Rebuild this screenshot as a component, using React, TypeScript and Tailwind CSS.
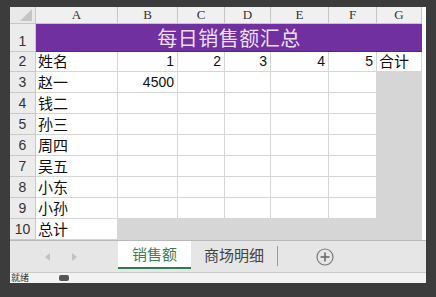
import React from "react";

const cjk = "font-['Noto_Sans_CJK_SC','Noto_Sans',sans-serif]";
const line = "border-r border-b border-[#d6d6d6]";

const letters = ["A", "B", "C", "D", "E", "F", "G"];
const names = ["赵一", "钱二", "孙三", "周四", "吴五", "小东", "小孙"];

function RowHead({ n }: { n: number }) {
  return (
    <div className="flex items-end justify-center border-r border-b border-[#c9c9c9] bg-[#ececec] pb-[1px] font-['Liberation_Sans',sans-serif] text-[14px] leading-[18px] text-[#333]">
      {n}
    </div>
  );
}

export default function App() {
  return (
    <div className="relative h-[297px] w-[436px] overflow-hidden bg-[#3c3c3c] pl-[10px] pr-[10px] pt-[7px]">
      <div className="flex h-[276px] w-[416px] flex-col overflow-hidden bg-white">
        {/* sheet */}
        <div className="grid grid-cols-[26px_82px_60px_47px_46px_58px_48px_45px] grid-rows-[17px_28px_20px_repeat(8,21px)] text-[#111]">
          {/* header row */}
          <div className="relative border-r border-b border-[#c6c6c6] bg-[#e9e9e9]">
            <svg width="12" height="12" className="absolute bottom-[2px] right-[3px]">
              <polygon points="12,0 12,12 0,12" fill="#c4c4c4" />
            </svg>
          </div>
          {letters.map((l) => (
            <div key={l} className="flex items-center justify-center border-r border-b border-[#c6c6c6] bg-[#f0f0f0] font-['Liberation_Serif',serif] text-[13px] text-[#333]">
              {l}
            </div>
          ))}

          {/* row 1 */}
          <RowHead n={1} />
          <div className={`col-span-7 flex items-center justify-center border-b border-[#5a2388] bg-[#7030a0] text-[20px] tracking-[0.5px] text-[#eadff5] ${cjk}`}>
            每日销售额汇总
          </div>

          {/* row 2 */}
          <RowHead n={2} />
          <div className={`${line} flex items-center pl-[2px] text-[15px] ${cjk}`}>姓名</div>
          {[1, 2, 3, 4, 5].map((d) => (
            <div key={d} className={`${line} flex items-center justify-end pr-[3px] font-['Liberation_Sans',sans-serif] text-[14px]`}>
              {d}
            </div>
          ))}
          <div className={`${line} flex items-center pl-[2px] text-[15px] ${cjk}`}>合计</div>

          {/* rows 3-9 */}
          {names.map((name, i) => (
            <React.Fragment key={name}>
              <RowHead n={i + 3} />
              <div className={`${line} flex items-center pl-[2px] text-[15px] ${cjk}`}>{name}</div>
              <div className={`${line} flex items-center justify-end pr-[3px] font-['Liberation_Sans',sans-serif] text-[14px]`}>
                {i === 0 ? "4500" : ""}
              </div>
              <div className={line} />
              <div className={line} />
              <div className={line} />
              <div className={line} />
              <div className="bg-[#d6d6d6]" />
            </React.Fragment>
          ))}

          {/* row 10 */}
          <RowHead n={10} />
          <div className={`${line} flex items-center pl-[2px] text-[15px] ${cjk}`}>总计</div>
          <div className="col-span-6 bg-[#d6d6d6]" />
        </div>

        {/* sheet tabs */}
        <div className="flex h-[32px] shrink-0 border-t border-[#b9b9b9] bg-[#e6e6e6]">
          <div className="flex w-[108px] items-center justify-center gap-[22px] pr-[6px]">
            <svg width="5" height="8"><polygon points="5,0 5,8 0,4" fill="#c2c2c2" /></svg>
            <svg width="5" height="8"><polygon points="0,0 0,8 5,4" fill="#c2c2c2" /></svg>
          </div>
          <div className={`flex h-[28px] w-[73px] items-center justify-center border-b-2 border-[#2f7a52] bg-white text-[15px] text-[#3f7d59] ${cjk}`}>
            销售额
          </div>
          <div className={`flex h-[28px] w-[86px] items-center justify-center text-[15px] text-[#444] ${cjk}`}>
            商场明细
          </div>
          <div className="mt-[5px] h-[20px] w-px bg-[#9a9a9a]" />
          <div className="flex flex-1 items-start justify-start pl-[38px] pt-[7px]">
            <svg width="18" height="18" viewBox="0 0 18 18">
              <circle cx="9" cy="9" r="8" fill="none" stroke="#7a7a7a" strokeWidth="1.2" />
              <line x1="9" y1="4.5" x2="9" y2="13.5" stroke="#6a6a6a" strokeWidth="1.6" />
              <line x1="4.5" y1="9" x2="13.5" y2="9" stroke="#6a6a6a" strokeWidth="1.6" />
            </svg>
          </div>
        </div>

        {/* status bar */}
        <div className="flex h-[11px] shrink-0 items-center gap-[30px] overflow-hidden border-t border-[#c9c9c9] bg-[#f2f2f2] pl-[1px]">
          <span className={`text-[9px] leading-[10px] text-[#333] ${cjk}`}>就绪</span>
          <span className="h-[6px] w-[10px] rounded-[2px] bg-[#555]" />
        </div>
      </div>
    </div>
  );
}
